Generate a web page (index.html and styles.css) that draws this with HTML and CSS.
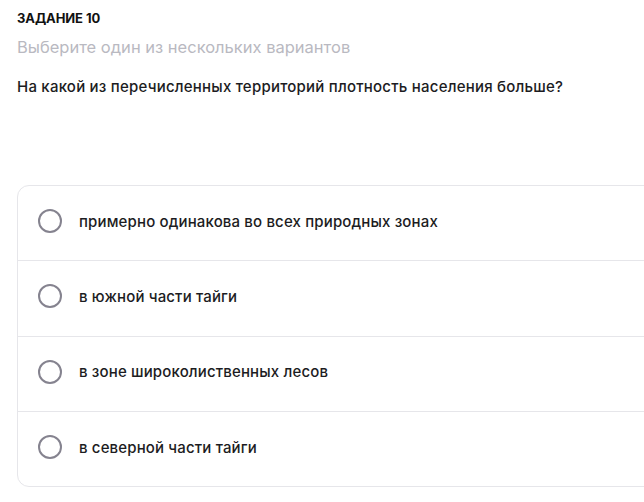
FILE: index.html
```html
<!DOCTYPE html>
<html lang="ru">
<head>
<meta charset="utf-8">
<link rel="stylesheet" href="styles.css">
</head>
<body>
<div class="page">
  <div class="task-label">ЗАДАНИЕ 10</div>
  <div class="hint">Выберите один из нескольких вариантов</div>
  <div class="question">На какой из перечисленных территорий плотность населения больше?</div>
  <div class="options">
    <label class="option"><span class="radio"></span><span class="text">примерно одинакова во всех природных зонах</span></label>
    <label class="option"><span class="radio"></span><span class="text">в южной части тайги</span></label>
    <label class="option"><span class="radio"></span><span class="text">в зоне широколиственных лесов</span></label>
    <label class="option"><span class="radio"></span><span class="text">в северной части тайги</span></label>
  </div>
</div>
</body>
</html>
```
FILE: styles.css
```css
html, body {
  margin: 0;
  padding: 0;
  background: #ffffff;
  overflow: hidden;
}
body {
  font-family: Inter, "Noto Sans", sans-serif;
  color: #1c1c22;
}
.page {
  padding: 10px 0 0 17px;
}
.task-label {
  font-size: 13px;
  font-weight: 700;
  line-height: 16px;
  letter-spacing: -0.1px;
  color: #111;
}
.hint {
  margin-top: 11px;
  font-size: 16.5px;
  line-height: 20px;
  color: #b9b9c1;
}
.question {
  margin-top: 20px;
  font-size: 15px;
  font-weight: 500;
  line-height: 20px;
  letter-spacing: 0.22px;
  color: #1c1c22;
}
.options {
  margin-top: 88px;
  width: 680px;
  border: 1px solid #e6e6ea;
  border-radius: 12px;
  display: flex;
  flex-direction: column;
}
.option {
  display: flex;
  align-items: center;
  gap: 17px;
  height: 74.3px;
  padding-left: 20px;
  border-top: 1px solid #e6e6ea;
}
.option:first-child {
  border-top: none;
}
.radio {
  width: 20px;
  height: 20px;
  border: 2.5px solid #85838f;
  border-radius: 50%;
  flex: none;
  margin-top: -4px;
}
.text {
  font-size: 15px;
  font-weight: 500;
  letter-spacing: 0.15px;
  color: #1c1c22;
  margin-top: -4px;
}
```
